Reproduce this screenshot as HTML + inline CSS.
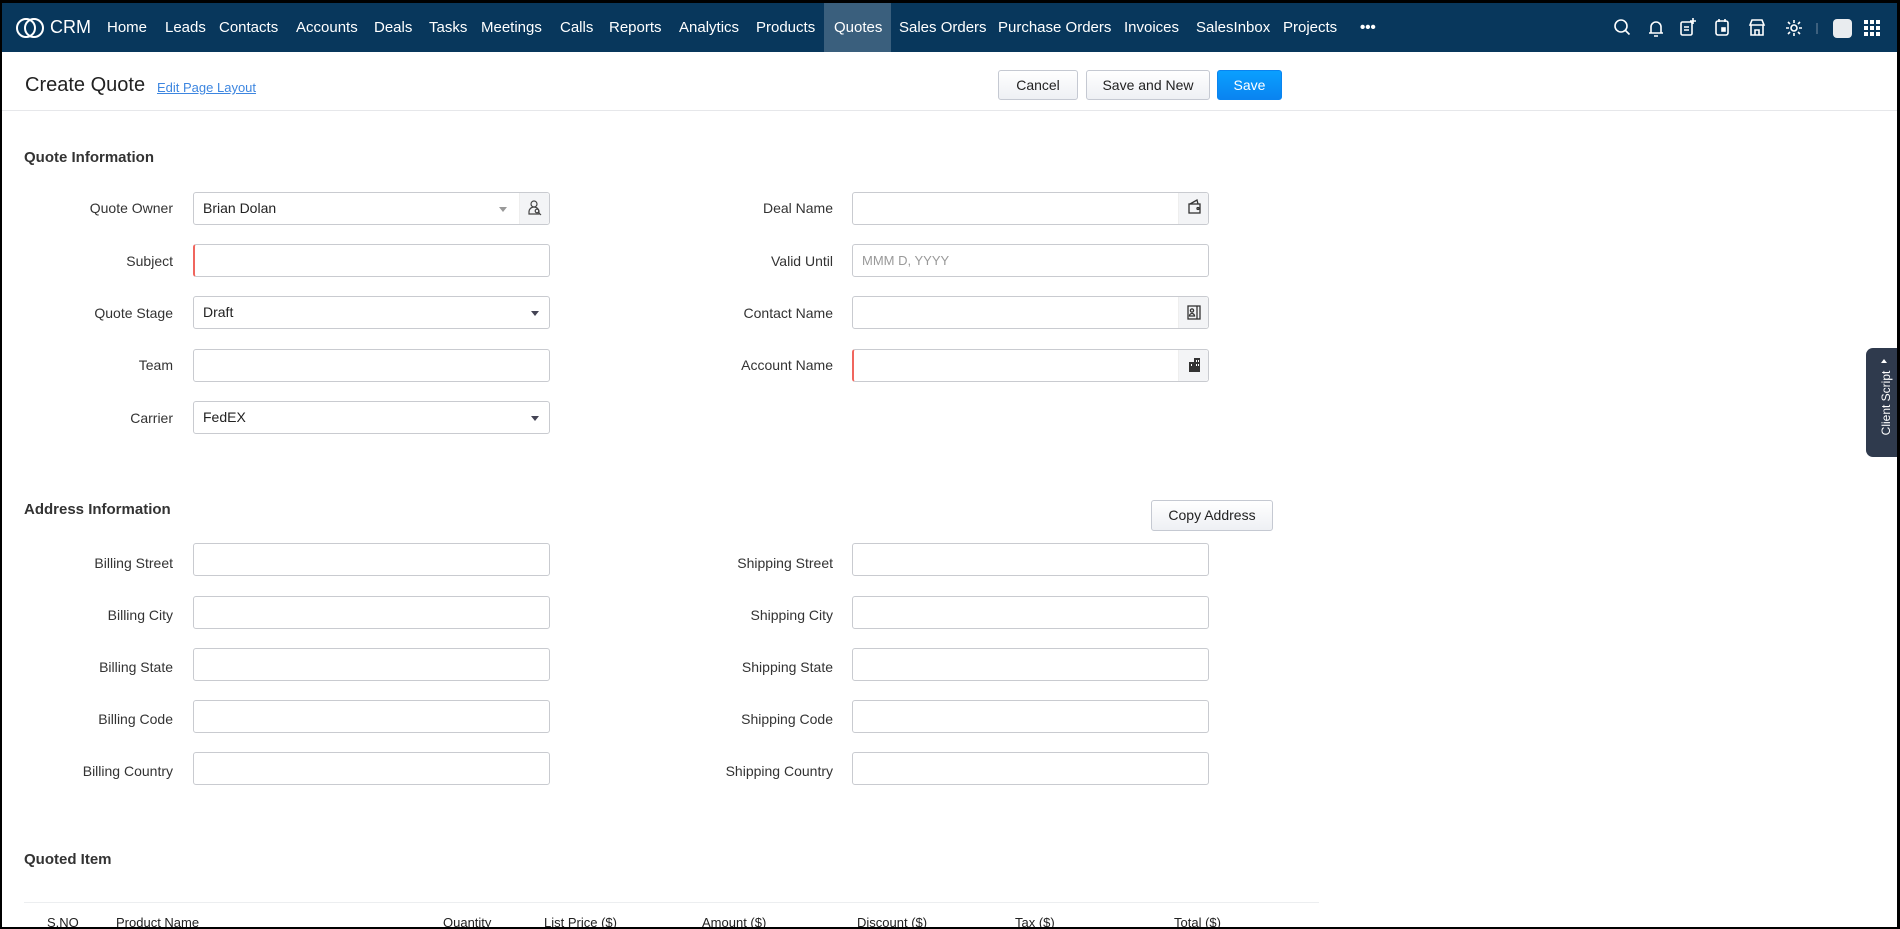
<!DOCTYPE html>
<html><head><meta charset="utf-8"><style>
*{box-sizing:border-box;margin:0;padding:0}
body{width:1900px;height:929px;overflow:hidden;background:#000;font-family:"Liberation Sans",sans-serif;position:relative}
#page{position:absolute;left:2px;top:3px;width:1895px;height:924px;background:#fff;overflow:hidden}
.a{position:absolute}
#nav{left:0;top:0;width:1895px;height:49px;background:#08375c}
.ni{position:absolute;top:0;height:49px;line-height:49px;color:#fff;font-size:15px;white-space:nowrap}
.lbl{position:absolute;font-size:14px;color:#333;text-align:right;width:200px;line-height:20px}
.in{position:absolute;height:33px;border:1px solid #c9cbd0;border-radius:3px;background:#fff;font-size:14px;color:#222;line-height:31px;padding-left:9px}
.req{border-left:2px solid #f0665e}
.side{position:absolute;right:0;top:0;width:30px;height:31px;background:#f3f4f6;border-left:1px solid #eee;border-radius:0 3px 3px 0}
.h{position:absolute;font-size:15px;font-weight:bold;color:#333}
.btn{position:absolute;height:30px;border:1px solid #c5c9d2;border-radius:3px;background:linear-gradient(#fff,#eef0f4);font-size:14px;color:#222;text-align:center;line-height:28px}
.th{position:absolute;top:912px;font-size:13px;color:#222}
.caret{position:absolute;width:0;height:0;border-left:4px solid transparent;border-right:4px solid transparent;border-top:5px solid #445}
</style></head><body><div id="page">
<div id="nav" class="a">
<svg class="a" style="left:13px;top:13px" width="30" height="24" viewBox="0 0 30 24"><g fill="none" stroke="#fff" stroke-width="2"><circle cx="11" cy="12" r="9"/><circle cx="19" cy="12" r="9"/></g></svg>
<div class="ni" style="left:48px;font-size:18px">CRM</div>
<div class="ni" style="left:105px">Home</div>
<div class="ni" style="left:163px">Leads</div>
<div class="ni" style="left:217px">Contacts</div>
<div class="ni" style="left:294px">Accounts</div>
<div class="ni" style="left:372px">Deals</div>
<div class="ni" style="left:427px">Tasks</div>
<div class="ni" style="left:479px">Meetings</div>
<div class="ni" style="left:558px">Calls</div>
<div class="ni" style="left:607px">Reports</div>
<div class="ni" style="left:677px">Analytics</div>
<div class="ni" style="left:754px">Products</div>
<div class="a" style="left:822px;top:0;width:67px;height:49px;background:#3a5f7d"></div>
<div class="ni" style="left:832px">Quotes</div>
<div class="ni" style="left:897px">Sales Orders</div>
<div class="ni" style="left:996px">Purchase Orders</div>
<div class="ni" style="left:1122px">Invoices</div>
<div class="ni" style="left:1194px">SalesInbox</div>
<div class="ni" style="left:1281px">Projects</div>
<div class="ni" style="left:1358px;font-weight:bold">•••</div>
<svg class="a" style="left:1610px;top:14px" width="270" height="22" viewBox="0 0 270 22"><g fill="none" stroke="#fff" stroke-width="1.6">
<circle cx="9" cy="9" r="6"/><path d="M13.5 13.5l4 4"/>
<path d="M39 16V10a5 5 0 0 1 10 0v6h2H37zM42 19h4"/>
<rect x="69" y="5" width="11" height="13" rx="1.5"/><path d="M72 10h5M72 13h5M81 1v6M78 4h6"/>
<rect x="104" y="4" width="12" height="14" rx="2"/><path d="M107 2v3M113 2v3"/><rect x="110" y="11" width="3" height="3" fill="#fff"/>
<path d="M138 8l2-5h10l2 5zM139 8v10h12V8M143 18v-5h4v5"/>
<circle cx="182" cy="11" r="3"/><path d="M182 3v3M182 16v3M174 11h3M187 11h3M176 5l2 2M186 15l2 2M176 17l2-2M186 7l2-2"/>
</g><path d="M205 6v11" stroke="#4f6f8a" stroke-width="1.5"/>
<rect x="221" y="2" width="19" height="19" rx="4" fill="#e9ecef"/>
<g fill="#fff"><rect x="252" y="3" width="4" height="4"/><rect x="258" y="3" width="4" height="4"/><rect x="264" y="3" width="4" height="4"/><rect x="252" y="9" width="4" height="4"/><rect x="258" y="9" width="4" height="4"/><rect x="264" y="9" width="4" height="4"/><rect x="252" y="15" width="4" height="4"/><rect x="258" y="15" width="4" height="4"/><rect x="264" y="15" width="4" height="4"/></g></svg>
</div>
<div class="a" style="left:23px;top:71px;font-size:20px;color:#222">Create Quote</div>
<div class="a" style="left:155px;top:77px;font-size:13px;color:#3d86e0;text-decoration:underline">Edit Page Layout</div>
<div class="btn" style="left:996px;top:67px;width:80px">Cancel</div>
<div class="btn" style="left:1084px;top:67px;width:124px">Save and New</div>
<div class="btn" style="left:1215px;top:67px;width:65px;background:linear-gradient(#0aa0ff,#0a84f0);border-color:#0a84f0;color:#fff">Save</div>
<div class="a" style="left:0;top:107px;width:1895px;height:1px;background:#e6e7ea"></div>

<div class="h" style="left:22px;top:146px">Quote Information</div>
<div class="lbl" style="left:-29px;top:195px">Quote Owner</div>
<div class="in" style="left:191px;top:189px;width:357px">Brian Dolan<div class="caret" style="right:42px;top:14px;border-top-color:#999"></div><div class="side"><svg width="30" height="31"><g fill="none" stroke="#444" stroke-width="1.2"><circle cx="14" cy="11" r="3"/><path d="M9 21v-2a5 5 0 0 1 10 0v2zM18 19l3 3"/><circle cx="17" cy="18" r="1.8"/></g></svg></div></div>
<div class="lbl" style="left:-29px;top:248px">Subject</div>
<div class="in req" style="left:191px;top:241px;width:357px"></div>
<div class="lbl" style="left:-29px;top:300px">Quote Stage</div>
<div class="in" style="left:191px;top:293px;width:357px">Draft<div class="caret" style="right:10px;top:14px"></div></div>
<div class="lbl" style="left:-29px;top:352px">Team</div>
<div class="in" style="left:191px;top:346px;width:357px"></div>
<div class="lbl" style="left:-29px;top:405px">Carrier</div>
<div class="in" style="left:191px;top:398px;width:357px">FedEX<div class="caret" style="right:10px;top:14px"></div></div>

<div class="lbl" style="left:631px;top:195px">Deal Name</div>
<div class="in" style="left:850px;top:189px;width:357px"><div class="side"><svg width="30" height="31"><g fill="none" stroke="#333" stroke-width="1.3"><rect x="10" y="11" width="11" height="9"/><path d="M11 11l7-4 1 4"/><circle cx="19" cy="15.5" r="1"/></g></svg></div></div>
<div class="lbl" style="left:631px;top:248px">Valid Until</div>
<div class="in" style="left:850px;top:241px;width:357px;color:#999;font-size:13px">MMM D, YYYY</div>
<div class="lbl" style="left:631px;top:300px">Contact Name</div>
<div class="in" style="left:850px;top:293px;width:357px"><div class="side"><svg width="30" height="31"><g fill="none" stroke="#333" stroke-width="1.3"><rect x="9" y="9" width="12" height="13"/><circle cx="13" cy="13.5" r="1.6"/><path d="M10.5 19a2.5 2.5 0 0 1 5 0zM18 9v13"/></g></svg></div></div>
<div class="lbl" style="left:631px;top:352px">Account Name</div>
<div class="in req" style="left:850px;top:346px;width:357px"><div class="side"><svg width="30" height="31"><g fill="#333"><rect x="10" y="12" width="5" height="10"/><rect x="15" y="8" width="6" height="14"/></g><g fill="#fff"><rect x="17" y="10" width="1" height="2"/><rect x="19" y="10" width="1" height="2"/><rect x="17" y="14" width="1" height="2"/><rect x="19" y="14" width="1" height="2"/><rect x="12" y="14" width="1" height="2"/></g></svg></div></div>

<div class="h" style="left:22px;top:498px">Address Information</div>
<div class="btn" style="left:1149px;top:497px;width:122px;height:31px">Copy Address</div>
<div class="lbl" style="left:-29px;top:550px">Billing Street</div>
<div class="in" style="left:191px;top:540px;width:357px"></div>
<div class="lbl" style="left:-29px;top:602px">Billing City</div>
<div class="in" style="left:191px;top:593px;width:357px"></div>
<div class="lbl" style="left:-29px;top:654px">Billing State</div>
<div class="in" style="left:191px;top:645px;width:357px"></div>
<div class="lbl" style="left:-29px;top:706px">Billing Code</div>
<div class="in" style="left:191px;top:697px;width:357px"></div>
<div class="lbl" style="left:-29px;top:758px">Billing Country</div>
<div class="in" style="left:191px;top:749px;width:357px"></div>
<div class="lbl" style="left:631px;top:550px">Shipping Street</div>
<div class="in" style="left:850px;top:540px;width:357px"></div>
<div class="lbl" style="left:631px;top:602px">Shipping City</div>
<div class="in" style="left:850px;top:593px;width:357px"></div>
<div class="lbl" style="left:631px;top:654px">Shipping State</div>
<div class="in" style="left:850px;top:645px;width:357px"></div>
<div class="lbl" style="left:631px;top:706px">Shipping Code</div>
<div class="in" style="left:850px;top:697px;width:357px"></div>
<div class="lbl" style="left:631px;top:758px">Shipping Country</div>
<div class="in" style="left:850px;top:749px;width:357px"></div>

<div class="h" style="left:22px;top:848px">Quoted Item</div>
<div class="a" style="left:22px;top:899px;width:1295px;height:1px;background:#eceef0"></div>
<div class="th" style="left:45px">S.NO</div>
<div class="th" style="left:114px">Product Name</div>
<div class="th" style="left:441px">Quantity</div>
<div class="th" style="left:542px">List Price ($)</div>
<div class="th" style="left:700px">Amount ($)</div>
<div class="th" style="left:855px">Discount ($)</div>
<div class="th" style="left:1013px">Tax ($)</div>
<div class="th" style="left:1172px">Total ($)</div>

<div class="a" style="left:1864px;top:345px;width:35px;height:109px;background:#2f3a4d;border-radius:7px 0 0 7px"></div>
<div class="a" style="left:1849px;top:390px;width:70px;height:20px;transform:rotate(-90deg);color:#fff;font-size:12px;text-align:center;line-height:20px">Client Script</div>
<div class="a" style="left:1879px;top:356px;width:0;height:0;border-left:3px solid transparent;border-right:3px solid transparent;border-bottom:4px solid #fff"></div>
</div></body></html>
